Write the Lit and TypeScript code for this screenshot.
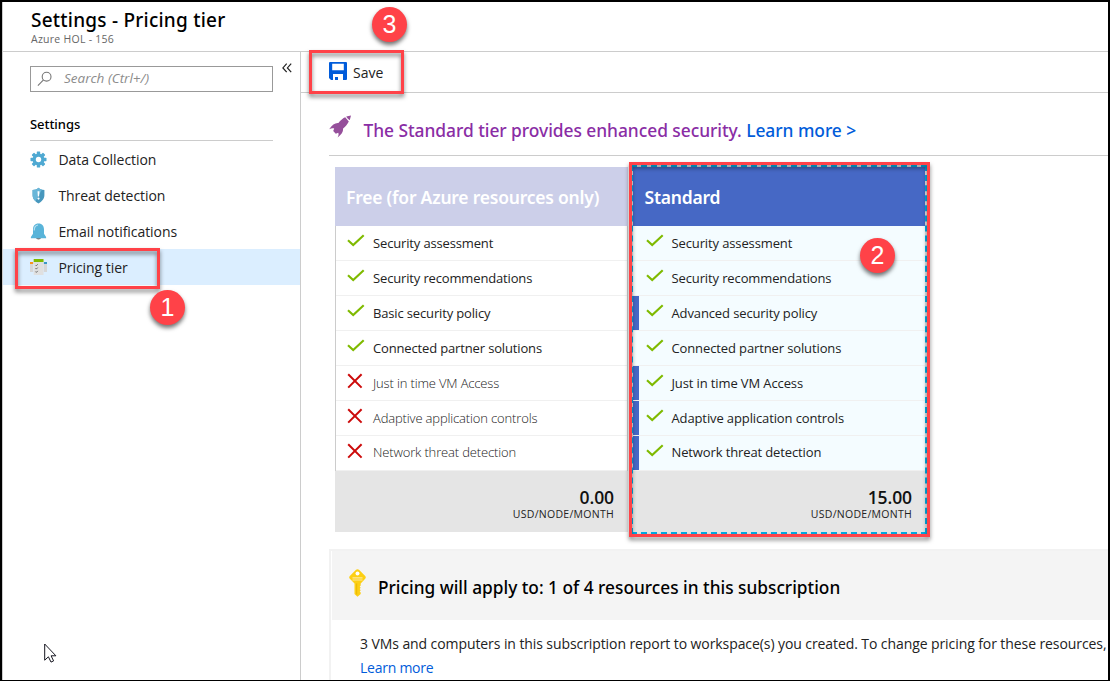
import { LitElement, html, css, svg } from "lit";
import { customElement } from "lit/decorators.js";
import { classMap } from "lit/directives/class-map.js";

const gear = svg`<svg width="17" height="17" viewBox="0 0 17 17"><g fill="#4fa9d2">${[0, 45, 90, 135].map(
  (a) => svg`<rect x="6.8" y="0.5" width="3.4" height="16" rx=".6" transform=${`rotate(${a} 8.5 8.5)`}/>`
)}<circle cx="8.5" cy="8.5" r="5.9"/></g><circle cx="8.5" cy="8.5" r="2.7" fill="#fff"/></svg>`;
const shield = svg`<svg width="17" height="17" viewBox="0 0 17 17"><path d="M8.5.8C7 2.3 5 3 2.6 3v5.200c0 3.800 2.700 6.300 5.900 8.300 3.200-2 5.900-4.500 5.900-8.300V3C12 3 10 2.300 8.500.8z" fill="#4797bd"/><path d="M8.500.8C7 2.300 5 3 2.600 3v5.200c0 2.500 1.200 4.500 2.900 6.100L12 2.600C10.700 2.300 9.500 1.700 8.500.8z" fill="#69b6d8"/><path d="M7.500 4.300h2l-.4 5.200H7.900z" fill="#fff"/><circle cx="8.500" cy="11.600" r="1.100" fill="#fff"/></svg>`;
const bell = svg`<svg width="17" height="17" viewBox="0 0 17 17"><path d="M6 14.500h5c0 1.300-1 2-2.500 2S6 15.800 6 14.500z" fill="#7a7a7a"/><path d="M8.500.5C4.800.5 3 3.100 3 6.500v4.300L.9 14v1.200h15.200V14L14 10.800V6.500C14 3.100 12.200.5 8.500.5z" fill="#59b4d9"/><path d="M4.200 7.500C4.200 4 5.500 2.400 8 2" stroke="#b8e0f0" stroke-width="1.200" fill="none"/></svg>`;
const tiers = svg`<svg width="17" height="17" viewBox="0 0 17 17"><rect x="0" y="4" width="3.200" height="9" fill="#d6d6d6"/><rect x="0" y="3" width="3.200" height="2" fill="#f7941d"/><rect x="13.800" y="4" width="3.200" height="9" fill="#d6d6d6"/><rect x="13.800" y="3" width="3.200" height="2" fill="#3999c6"/><rect x="3.700" y="1" width="9.800" height="15" fill="#e0e0e0"/><rect x="3.700" y="0" width="9.800" height="3" fill="#7fba00"/><path d="M5.500 6l.8.8 1.400-1.500M5.500 9.300l.8.800 1.400-1.500M5.500 12.600l.8.800 1.400-1.500" stroke="#666" stroke-width="1" fill="none"/></svg>`;
const check = svg`<svg width="18" height="13" viewBox="0 0 18 13"><path d="M1 6.200l5.200 4.900L16.700 1.200" fill="none" stroke="#7fba00" stroke-width="2.100"/></svg>`;
const cross = svg`<svg width="16" height="16" viewBox="0 0 16 16"><path d="M1.200 1.200l13.400 13.400M14.600 1.200L1.200 14.600" stroke="#cc0a0a" stroke-width="2" fill="none"/></svg>`;
const disk = svg`<svg width="18" height="18" viewBox="0 0 18 18"><path d="M1 0h16a1 1 0 0 1 1 1v16a1 1 0 0 1-1 1H2L0 16V1a1 1 0 0 1 1-1z" fill="#015cda"/><path d="M3.200 1.800h11.600v6.400H3.200zM4 12h10v6H9v-3H6v3H4z" fill="#fff"/></svg>`;
const rocket = svg`<svg width="23" height="23" viewBox="0 0 23 23"><g fill="#954f9b"><path d="M17.300 1.600L22 .4l-1.200 4.700c-.6.200-3.700-2.900-3.500-3.500z"/><path d="M16.200 2.300c-2 .8-4.700 3-6.800 5.800C6 7.800 3.200 9.900.2 14.200c2-.9 3.700-1.100 5-.6l-1 2.500 2.600 2.600 2.400-.9c.7 1.400.5 2.500-.6 4.600 3.900-3.200 5.700-5.400 5.500-9 2.300-1.900 4.700-4.600 5.700-7z"/></g></svg>`;
const key = svg`<svg width="17" height="28" viewBox="0 0 17 28"><path d="M8.500.2c.6 0 1 .2 1.500.6l6.200 6.300c.8.900.8 1.800 0 2.700l-4.500 4.700v2l-1 1 1 1.300-1 1.200 1 1.300-1 1.200 1 1v1.600L8.500 27.700l-3-2.700V14.500L.8 9.800c-.8-.9-.8-1.800 0-2.700L7 .8c.5-.4.900-.6 1.500-.6z" fill="#fccf14"/><circle cx="8.500" cy="4.600" r="2" fill="#fff"/><path d="M3.500 8.900h10M3.500 11h10" stroke="#fdea9a" stroke-width="1.100"/><path d="M7.700 14.500v11" stroke="#e6b400" stroke-width=".9"/></svg>`;
const lens = svg`<svg width="16" height="16" viewBox="0 0 16 16"><g fill="none" stroke="#777" stroke-width="1.100"><circle cx="9.600" cy="5.700" r="4.400"/><path d="M6.500 8.900L.9 14.600"/></g></svg>`;
const chevrons = svg`<svg width="10" height="10" viewBox="0 0 10 10"><path d="M4.700.6L.9 4.900l3.800 4.300M9.200.6L5.400 4.900l3.800 4.300" fill="none" stroke="#222" stroke-width="1.200"/></svg>`;
const pointer = svg`<svg width="13" height="21" viewBox="0 0 13 21"><path d="M.7 1v16.200l3.700-3.400 2.600 5.300 2.600-1.200-2.500-5.100h4.800z" fill="#fff" stroke="#15151f" stroke-width="1"/></svg>`;

const navItems = [
  { icon: gear, label: "Data Collection" },
  { icon: shield, label: "Threat detection" },
  { icon: bell, label: "Email notifications" },
  { icon: tiers, label: "Pricing tier", selected: true },
];

interface Feature { name: string; included: boolean; extra?: boolean }

const freeFeatures: Feature[] = [
  { name: "Security assessment", included: true },
  { name: "Security recommendations", included: true },
  { name: "Basic security policy", included: true },
  { name: "Connected partner solutions", included: true },
  { name: "Just in time VM Access", included: false },
  { name: "Adaptive application controls", included: false },
  { name: "Network threat detection", included: false },
];

const standardFeatures: Feature[] = [
  { name: "Security assessment", included: true },
  { name: "Security recommendations", included: true },
  { name: "Advanced security policy", included: true, extra: true },
  { name: "Connected partner solutions", included: true },
  { name: "Just in time VM Access", included: true, extra: true },
  { name: "Adaptive application controls", included: true, extra: true },
  { name: "Network threat detection", included: true, extra: true },
];

@customElement("app-root")
export class AppRoot extends LitElement {
  static styles = css`
    :host { display: block; }
    * { box-sizing: border-box; }
    svg { display: block; flex: none; }
    .page {
      position: relative; display: flex; flex-direction: column; width: 1110px; height: 681px;
      border: solid #000; border-width: 2px 2px 1px 2px; overflow: hidden;
      background: #fff; color: #222; font-family: "Open Sans", "Noto Sans", sans-serif; font-size: 14px; white-space: nowrap;
    }
    .title, .group, .promo, .name, .scopehead { font-family: "Noto Sans", "Open Sans", sans-serif; }
    .head { height: 50px; border-bottom: 1px solid #ccc; border-left: 1px solid #ccc; padding: 5px 0 0 28px; flex: none; }
    .title { font-size: 19px; line-height: 26px; font-weight: 500; color: #000; letter-spacing: .23px; }
    .sub { font-size: 10.5px; line-height: 13px; color: #666; letter-spacing: .26px; }
    .body { display: flex; flex: 1; min-height: 0; }
    .side { width: 299px; flex: none; border: solid #ccc; border-width: 0 1px; }
    .find { display: flex; gap: 9px; padding: 14px 0 0 27px; }
    .find > svg { margin-top: -3px; }
    .search { display: flex; align-items: center; width: 243px; height: 26px; border: 1px solid #999; padding: 0 0 2px 6px; gap: 11px; font-style: italic; font-size: 13.5px; letter-spacing: 0; color: #8c8c8c; }
    .search svg { margin-top: 2px; }
    .group { margin: 20px 0 0 27px; width: 243px; height: 29px; border-bottom: 1px solid #ccc; line-height: 25px; font-size: 13px; font-weight: 500; color: #000; letter-spacing: -.05px; }
    .nav { display: flex; align-items: center; height: 36px; padding-left: 27px; gap: 11.4px; letter-spacing: -.05px; }
    .nav.on { background: #dbeeff; }
    .main { flex: 1; min-width: 0; display: flex; flex-direction: column; }
    .bar { height: 41px; flex: none; border-bottom: 1px solid #ccc; display: flex; align-items: center; gap: 6px; padding: 0 0 1px 28px; }
    .bar span { padding-top: 2px; }
    .bar svg { margin-top: -1px; }
    .content { padding-left: 28px; }
    .promo { display: flex; height: 63px; border-bottom: 1px solid #ccc; align-items: flex-start; gap: 11.5px; font-size: 17.4px; line-height: 24px; font-weight: 500; letter-spacing: -.05px; color: #8a2da5; padding-top: 25px; }
    .promo svg { margin-top: -3px; }
    .promo a, .link { color: #015cda; }
    .link { letter-spacing: -.25px; }
    .plans { display: flex; gap: 5px; padding: 11px 0 0 6px; }
    .plan { width: 293px; }
    .name { height: 59px; padding-left: 11px; line-height: 61px; font-size: 17.5px; font-weight: 600; color: #fff; background: #4668c5; letter-spacing: -.22px; }
    .muted .name { background: #cccfe9; }
    .rows { border: solid #ccc; border-width: 0 1px; }
    .row { display: flex; align-items: center; height: 35px; border-bottom: 1px solid #f0f0f0; font-size: 13px; letter-spacing: -.15px; }
    .row:last-child span:last-child { padding-bottom: 2px; }
    .foot { height: 61px; background: #e5e5e5; text-align: right; padding: 15px 14px 0 0; }
    .mark { width: 37px; padding-left: 11px; padding-bottom: 5px; flex: none; }
    .off { font-weight: 300; letter-spacing: -.15px; }
    .sel .name { padding-left: 11.5px; }
    .sel .row { background: #f4fcff; letter-spacing: -.12px; }
    .sel .rows { border-left: 0; }
    .sel .mark { width: 38.500px; padding-left: 12.5px; }
    .row.extra { box-shadow: inset 6px 0 #4668c5; }
    .price { font-size: 17.500px; line-height: 22px; font-weight: 600; color: #111; letter-spacing: -.1px; }
    .unit { font-size: 10.5px; line-height: 12px; letter-spacing: .28px; }
    .scope { margin-top: 17px; border: solid #f2f2f2; border-width: 2px 0 0 2px; height: 131px; padding-left: 1px; }
    .scopehead { display: flex; align-items: center; height: 69px; background: #f4f4f4; padding-left: 17px; gap: 12px; font-size: 17.3px; font-weight: 500; color: #000; }
    .scopehead svg { margin-top: -6px; }
    .scopehead span { padding-top: 4px; }
    .note { padding: 12px 0 0 28px; line-height: 24px; letter-spacing: -.085px; }
    .box { position: absolute; border: 3px solid #ff4248; filter: drop-shadow(0 3px 2px rgba(0,0,0,.5)); }
    .b1 { left: 13px; top: 246px; width: 145px; height: 41px; }
    .b2 { left: 627px; top: 160px; width: 301px; height: 375px; }
    .b3 { left: 307px; top: 48px; width: 95px; height: 44px; }
    .pin { position: absolute; width: 35px; height: 35px; border-radius: 50%; background: #ff4248; color: #fff; font: 25px/35px "Liberation Sans", Arial, sans-serif; text-align: center; box-shadow: 0 3px 4px rgba(0,0,0,.55); }
    .p1 { left: 148px; top: 288px; } .p2 { left: 858px; top: 236px; } .p3 { left: 370px; top: 5px; }
    .dash { position: absolute; left: 629px; top: 163px; width: 296px; height: 369px; border: 2px solid #e2e2e2; }
    .dash::after { content: ""; position: absolute; inset: -2px; border: 2px dashed #00aee6; }
    .cursor { position: absolute; left: 42px; top: 641px; }
  `;

  private plan(kind: string, title: string, items: Feature[], price: string) {
    return html`<div class="plan ${kind}">
      <div class="name">${title}</div>
      <div class="rows">
        ${items.map(
          (f) => html`<div class=${classMap({ row: true, off: !f.included, extra: !!f.extra })}>
            <span class="mark">${f.included ? check : cross}</span><span>${f.name}</span>
          </div>`
        )}
      </div>
      <div class="foot"><div class="price">${price}</div><div class="unit">USD/NODE/MONTH</div></div>
    </div>`;
  }

  render() {
    return html`<div class="page">
      <div class="head"><div class="title">Settings - Pricing tier</div><div class="sub">Azure HOL - 156</div></div>
      <div class="body">
        <div class="side">
          <div class="find"><div class="search">${lens}<span>Search (Ctrl+/)</span></div>${chevrons}</div>
          <div class="group">Settings</div>
          ${navItems.map((n) => html`<div class=${classMap({ nav: true, on: !!n.selected })}>${n.icon}<span>${n.label}</span></div>`)}
        </div>
        <div class="main">
          <div class="bar">${disk}<span>Save</span></div>
          <div class="content">
            <div class="promo">${rocket}<span>The Standard tier provides enhanced security. <a>Learn more &gt;</a></span></div>
            <div class="plans">
              ${this.plan("muted", "Free (for Azure resources only)", freeFeatures, "0.00")}
              ${this.plan("sel", "Standard", standardFeatures, "15.00")}
            </div>
            <div class="scope">
              <div class="scopehead">${key}<span>Pricing will apply to: 1 of 4 resources in this subscription</span></div>
              <div class="note">3 VMs and computers in this subscription report to workspace(s) you created. To change pricing for these resources,<br /><a class="link">Learn more</a></div>
            </div>
          </div>
        </div>
      </div>
      <div class="dash"></div>
      <div class="box b1"></div><div class="box b2"></div><div class="box b3"></div>
      <div class="pin p1">1</div><div class="pin p2">2</div><div class="pin p3">3</div>
      <div class="cursor">${pointer}</div>
    </div>`;
  }
}
